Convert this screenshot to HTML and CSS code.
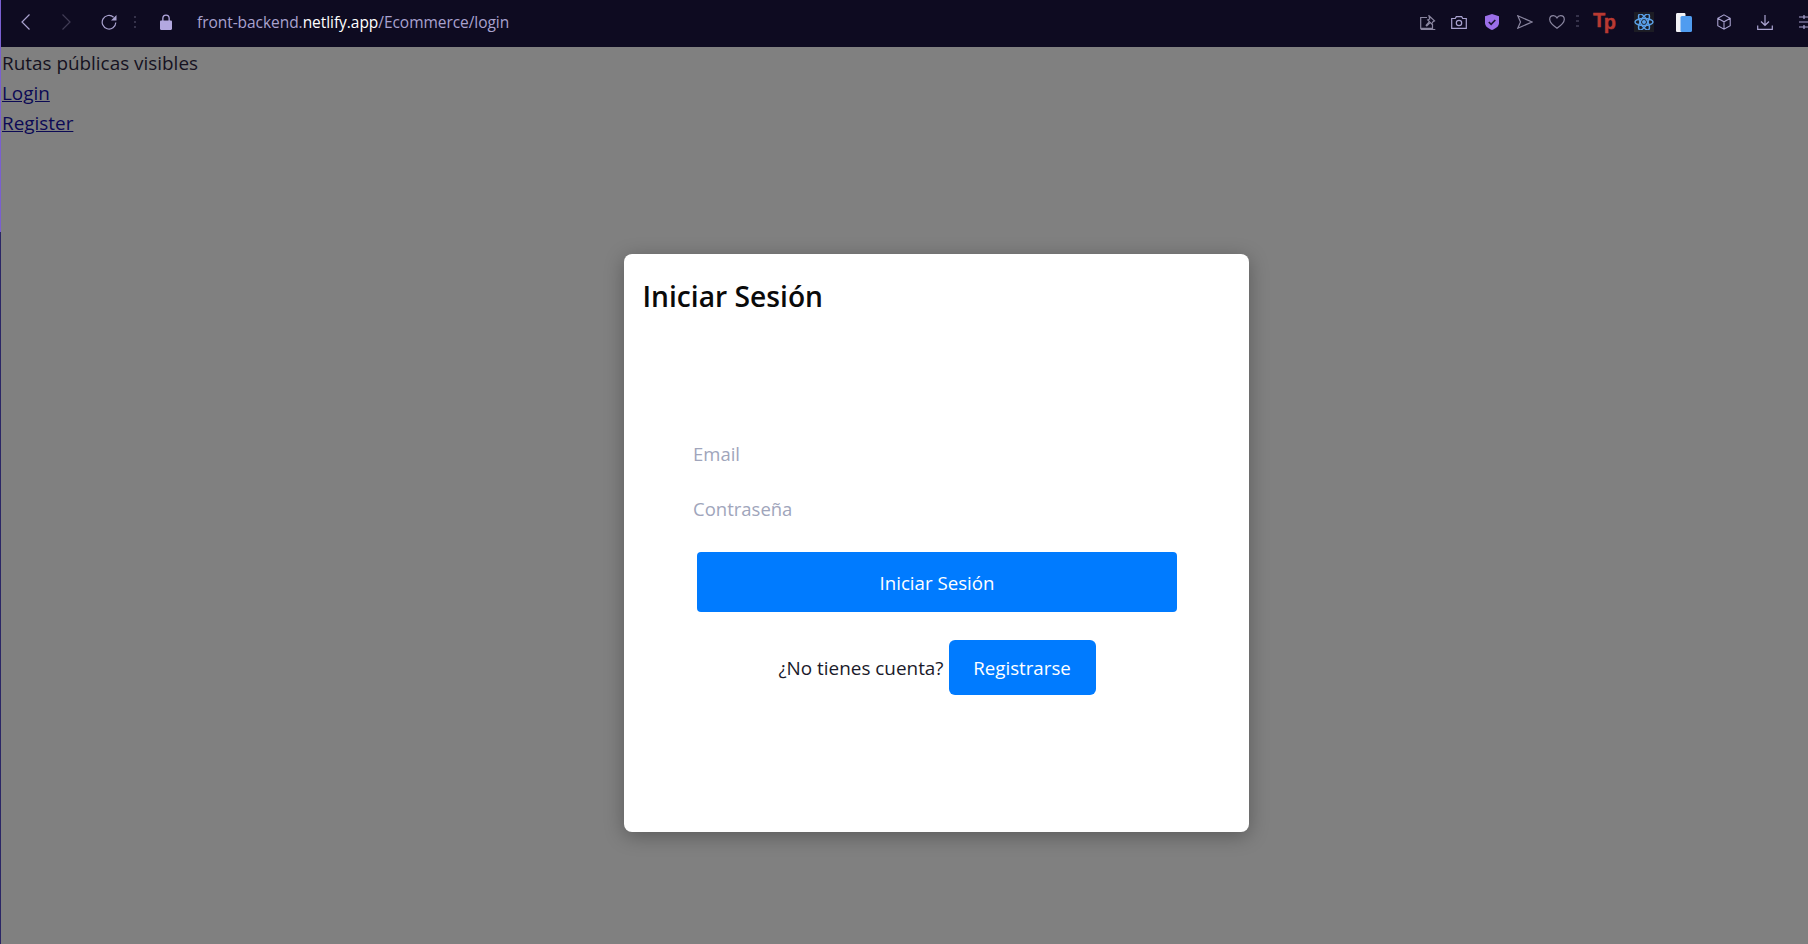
FILE: index.html
```html
<!DOCTYPE html>
<html lang="es">
<head>
<meta charset="utf-8">
<title>Login</title>
<link rel="stylesheet" href="styles.css">
</head>
<body>
<header class="chrome">
  <div class="nav">
    <svg class="ic back" width="9" height="16" viewBox="0 0 9 16"><path d="M8.500.5 1 8l7.500 7.500"/></svg>
    <svg class="ic fwd" width="9" height="16" viewBox="0 0 9 16"><path d="M.5.500 8 8 .5 15.500"/></svg>
    <svg class="ic reload" width="16" height="16" viewBox="0 0 16 16"><path d="M14.800 8.500a6.800 6.800 0 1 1-2.200-5.300"/><path class="solid" d="M15.500 1v5.500H10z"/></svg>
    <span class="grip"></span>
    <svg class="lock" width="12" height="16" viewBox="0 0 12 16"><path d="M2.200 6.500V4.200a3.800 3.800 0 0 1 7.600 0v2.300h1c.7 0 1.200.5 1.200 1.200v7.100c0 .7-.5 1.200-1.200 1.200H1.200C.5 16 0 15.500 0 14.800V7.700c0-.7.500-1.200 1.200-1.200zm1.300 0h5V4.200a2.500 2.500 0 0 0-5 0z"/></svg>
    <div class="url">front-backend.<b>netlify.app</b>/Ecommerce/login</div>
  </div>
  <div class="tools">
    <svg class="ic t1 dim" width="16" height="15" viewBox="0 0 16 15"><path d="M7 2.500H.7v10.800h11.800V9M.7 14.500h14.600"/><path d="M9 .8l5.500 5-1.500.8-1.200 2.400-1.500-1.500-3.500 3.300-.6-.6 3.200-3.600L7.700 5l2-1z"/></svg>
    <svg class="ic t2" width="16" height="13" viewBox="0 0 16 13"><path d="M.7 2.500h3.600l1-1.800h5.400l1 1.800h3.600v9.800H.7z"/><circle cx="8" cy="7" r="2.700"/></svg>
    <svg class="t3" width="14" height="16" viewBox="0 0 14 16"><path class="shield" d="M7 0l7 2.300V9c0 3.500-3.500 5.600-7 7-3.500-1.400-7-3.500-7-7V2.300z"/><path class="check" d="M3.800 8l2.300 2.300 4.200-4.300"/></svg>
    <svg class="ic t4 dim" width="16" height="14" viewBox="0 0 16 14"><path d="M.8.800 15 7 .8 13.200 3.500 7z"/></svg>
    <svg class="ic t5 dim" width="16" height="14" viewBox="0 0 16 14"><path d="M8 13.300C4.500 10.800.7 8 .7 4.500.7 2.300 2.300.7 4.400.7 5.900.7 7.200 1.500 8 2.900 8.800 1.500 10.100.7 11.600.7c2.100 0 3.700 1.600 3.700 3.800 0 3.500-3.800 6.300-7.300 8.800z"/></svg>
    <span class="grip t6"></span>
    <span class="tp">T<i>p</i></span>
    <span class="react"><svg width="20" height="16" viewBox="-10 -8 20 16"><g class="orbit"><ellipse rx="9" ry="3.500"/><ellipse rx="9" ry="3.500" transform="rotate(60)"/><ellipse rx="9" ry="3.500" transform="rotate(120)"/></g><circle r="2" class="nucleus"/></svg></span>
    <svg class="t9" width="16" height="19" viewBox="0 0 16 19"><path class="sheet" d="M0 1.500C0 .5.500 0 1.500 0H8c1 0 1.500.5 1.500 1.500V19H1.500C.5 19 0 18.500 0 17.500z"/><rect class="leaf" x="4.500" y="3" width="11.500" height="16" rx="1.500"/></svg>
    <svg class="ic t10" width="16" height="16" viewBox="0 0 16 18"><path d="M8 1l7 3.800v8.400L8 17l-7-3.800V4.800zM1 4.800l7 4 7-4M8 8.800V17"/></svg>
    <svg class="ic t11" width="16" height="15" viewBox="0 0 16 15"><path d="M8 0v10M4 6.500l4 3.800 4-3.800M.7 10.500v3.800h14.600v-3.800"/></svg>
    <svg class="ic t12" width="18" height="16" viewBox="0 0 18 16"><path d="M0 3h18M0 8h18M0 13h18M5 1v4M11 6v4M5 11v4"/></svg>
  </div>
</header>
<main class="page">
  <div class="routes">
    <div>Rutas públicas visibles</div>
    <div><a href="#">Login</a></div>
    <div><a href="#">Register</a></div>
  </div>
  <div class="overlay">
    <section class="modal">
      <h2 class="title">Iniciar Sesión</h2>
      <form class="form">
        <input class="field" type="email" placeholder="Email">
        <input class="field" type="password" placeholder="Contraseña">
        <button class="btn submit" type="button">Iniciar Sesión</button>
      </form>
      <p class="signup"><span>¿No tienes cuenta?</span><button class="btn register" type="button">Registrarse</button></p>
    </section>
  </div>
</main>
<span class="edge"></span>
</body>
</html>
```
FILE: styles.css
```css
html, body { margin: 0; height: 100%; overflow: hidden; }
body { display: flex; flex-direction: column; font-family: "Open Sans", "Noto Sans", sans-serif; background: #808080; border-left: 1px solid #2b2666; box-sizing: border-box; }
.edge { position: absolute; left: 0; top: 0; width: 1px; height: 232px; background: #7a5fd0; }
.chrome { flex: 0 0 47px; box-sizing: border-box; padding-bottom: 3px; display: flex; align-items: center; justify-content: space-between; background: #0e0b21; overflow: hidden; }
.nav { display: flex; align-items: center; padding-left: 20px; }
.ic { fill: none; stroke: #a9a2cf; stroke-width: 1.200; flex: none; }
.solid { fill: #a9a2cf; stroke: none; }
.fwd { stroke: #403c55; margin-left: 32px; }
.reload { margin-left: 30px; }
.grip { width: 2px; height: 13px; margin-left: 17px; background: repeating-linear-gradient(#35324a 0 2px, transparent 2px 5px); flex: none; }
.lock { fill: #b3a8e0; margin-left: 24px; flex: none; }
.url { margin-left: 25px; font-size: 15.500px; letter-spacing: -0.050px; color: #a9a2cf; white-space: nowrap; }
.url b { font-weight: 400; color: #fff; }
.tools { display: flex; align-items: center; margin-right: -9px; }
.tools > * { flex: none; }
.dim { stroke: #8a86a0; }
.t2 { margin-left: 15px; }
.t3, .t4 { margin-left: 18px; }
.t5 { margin-left: 16px; }
.t6 { margin-left: 11px; width: 3px; height: 14px; }
.shield { fill: #9b6fe8; }
.check { fill: none; stroke: #1a1530; stroke-width: 1.600; }
.tp { margin-left: 14px; width: 20px; height: 22px; font: 900 20px/18px "Liberation Sans", sans-serif; letter-spacing: -1.500px; color: #b93a32; -webkit-text-stroke: .4px #b93a32; white-space: nowrap; }
.tp i { font-style: normal; position: relative; top: 2px; }
.react { margin-left: 21px; width: 20px; height: 20px; background: #1c1c24; display: flex; align-items: center; justify-content: center; }
.orbit { fill: none; stroke: #5aa0e8; stroke-width: 1.500; }
.nucleus { fill: #5aa0e8; }
.t9 { margin-left: 22px; }
.sheet { fill: #f2f2f6; }
.leaf { fill: #4f9cf0; }
.t10 { margin-left: 24px; }
.t11 { margin-left: 25px; }
.t12 { margin-left: 26px; }
.page { flex: 1; min-height: 0; position: relative; }
.routes { padding: 1px 0 0 1px; font-size: 18.900px; line-height: 30px; color: #15121f; }
.routes a { color: #0c0a55; }
.overlay { position: absolute; inset: 0; display: flex; justify-content: center; align-items: flex-start; padding: 207px 0 0 63px; box-sizing: border-box; }
.modal { width: 625px; height: 578px; box-sizing: border-box; padding: 23px 19px 0; background: #fff; border-radius: 8px; box-shadow: 0 4px 20px rgba(0,0,0,.3); }
.title { margin: 0; font-size: 28.200px; line-height: 38px; font-weight: 600; color: #0a0a0a; }
.form { display: flex; flex-direction: column; align-items: center; margin-top: 124px; padding-left: 2px; }
.field { width: 488px; box-sizing: border-box; height: 28px; border: 0; outline: 0; padding: 0; font: 18.500px "Open Sans", "Noto Sans", sans-serif; background: transparent; margin-bottom: 27px; }
.field::placeholder { color: #a0a5bb; opacity: 1; }
.field + .field { margin-bottom: 30px; }
.btn { border: 0; background: #007bff; color: #fff; font: 18.700px "Open Sans", "Noto Sans", sans-serif; cursor: pointer; }
.submit { width: 480px; height: 60px; border-radius: 4px; }
.signup { display: flex; align-items: center; justify-content: center; gap: 5px; margin: 28px 0 0; padding-left: 2px; font-size: 18.900px; color: #1a1a2a; }
.register { width: 147px; height: 55px; border-radius: 6px; }
```
